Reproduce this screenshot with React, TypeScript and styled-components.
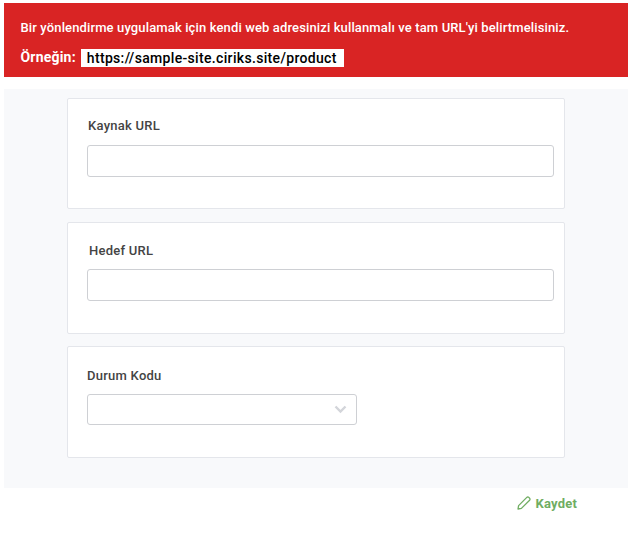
import React from "react";
import styled, { createGlobalStyle } from "styled-components";

const Global = createGlobalStyle`
  html, body { margin: 0; padding: 0; background: #fff; }
  body { font-family: Roboto, "Liberation Sans", sans-serif; }
`;

const Page = styled.div`
  width: 633px;
  height: 534px;
  padding: 3px 5px 0 4px;
  box-sizing: border-box;
  overflow: hidden;
`;

const Alert = styled.div`
  height: 74px;
  background: #d92424;
  color: #fff;
  padding: 17px 0 0 16.5px;
  box-sizing: border-box;
  font-weight: 500;
`;

const AlertLine = styled.div`
  font-size: 13px;
  line-height: 15px;
  letter-spacing: 0.13px;
`;

const ExampleRow = styled.div`
  display: flex;
  align-items: center;
  margin-top: 13px;
  height: 19px;
`;

const ExampleLabel = styled.span`
  font-size: 14px;
  font-weight: 700;
  letter-spacing: 0.2px;
  margin-right: 5px;
  position: relative;
  top: -1px;
`;

const ExampleUrl = styled.code`
  background: #fff;
  color: #000;
  font-family: Roboto, "Liberation Sans", sans-serif;
  font-size: 14px;
  font-weight: 500;
  letter-spacing: 0.33px;
  line-height: 18px;
  height: 18px;
  padding: 0 7px 0 6px;
`;

const Panel = styled.div`
  margin-top: 12px;
  height: 399px;
  background: #f8f9fb;
  padding: 9px 63px 0;
  box-sizing: border-box;
  display: flex;
  flex-direction: column;
`;

const Card = styled.section<{ $height: number; $gap: number; $top: number }>`
  height: ${(p) => p.$height}px;
  margin-bottom: ${(p) => p.$gap}px;
  padding: ${(p) => p.$top}px 10px 0 19px;
  box-sizing: border-box;
  background: #fff;
  border: 1px solid #e4e6eb;
  border-radius: 2px;
`;

const FieldLabel = styled.label<{ $left: number; $below: number }>`
  display: block;
  margin-left: ${(p) => p.$left}px;
  margin-bottom: ${(p) => p.$below}px;
  font-size: 13px;
  line-height: 15px;
  font-weight: 500;
  color: #444;
  letter-spacing: 0.25px;
`;

const TextInput = styled.input`
  display: block;
  width: 100%;
  height: 32px;
  box-sizing: border-box;
  background: #fff;
  border: 1px solid #ced0d4;
  border-radius: 3px;
  outline: none;
`;

const SelectBox = styled.div`
  width: 270px;
  height: 31px;
  box-sizing: border-box;
  background: #fff;
  border: 1px solid #ced0d4;
  border-radius: 3px;
  display: flex;
  align-items: center;
  justify-content: flex-end;
  padding-right: 9px;
`;

const Footer = styled.div`
  display: flex;
  justify-content: flex-end;
  align-items: center;
  height: 30px;
  padding-right: 51px;
`;

const SaveButton = styled.button`
  display: flex;
  align-items: center;
  gap: 4px;
  padding: 0;
  border: 0;
  background: none;
  color: #70ad62;
  font-family: Roboto, "Liberation Sans", sans-serif;
  font-size: 13px;
  font-weight: 700;
  letter-spacing: 0.2px;
`;

export default function App() {
  return (
    <Page>
      <Global />
      <Alert>
        <AlertLine>Bir yönlendirme uygulamak için kendi web adresinizi kullanmalı ve tam URL'yi belirtmelisiniz.</AlertLine>
        <ExampleRow>
          <ExampleLabel>Örneğin:</ExampleLabel>
          <ExampleUrl>https://sample-site.ciriks.site/product</ExampleUrl>
        </ExampleRow>
      </Alert>
      <Panel>
        <Card $height={111} $gap={13} $top={19}>
          <FieldLabel $left={1} $below={12}>Kaynak URL</FieldLabel>
          <TextInput />
        </Card>
        <Card $height={112} $gap={12} $top={20}>
          <FieldLabel $left={2} $below={11}>Hedef URL</FieldLabel>
          <TextInput />
        </Card>
        <Card $height={112} $gap={0} $top={21}>
          <FieldLabel $left={0} $below={11}>Durum Kodu</FieldLabel>
          <SelectBox>
            <svg width="13" height="9" viewBox="0 0 13 9" fill="none">
              <path d="M1.5 1.5 6.5 6.5 11.5 1.5" stroke="#d3d5da" strokeWidth="2.4" />
            </svg>
          </SelectBox>
        </Card>
      </Panel>
      <Footer>
        <SaveButton>
          <svg width="14" height="14" viewBox="0 0 14 14" fill="none">
            <path d="M1 13 1.6 9.6 9.8 1.4a1.4 1.4 0 0 1 2 0l.8.8a1.4 1.4 0 0 1 0 2L4.4 12.4Z" stroke="#70ad62" strokeWidth="1.3" strokeLinejoin="round" />
          </svg>
          Kaydet
        </SaveButton>
      </Footer>
    </Page>
  );
}
